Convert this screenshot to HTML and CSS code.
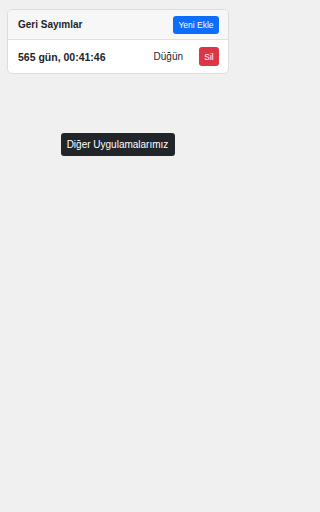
FILE: index.html
```html
<!DOCTYPE html>
<html lang="tr">
<head>
<meta charset="utf-8">
<meta name="viewport" content="width=237">
<link rel="stylesheet" href="styles.css">
</head>
<body>
<div class="page">
  <div class="card">
    <div class="card-header">
      <span class="title">Geri Sayımlar</span>
      <span class="btn btn-primary">Yeni Ekle</span>
    </div>
    <div class="row">
      <span class="count">565 gün, 00:41:46</span>
      <span class="right">
        <span class="label">Düğün</span>
        <span class="btn btn-danger">Sil</span>
      </span>
    </div>
  </div>
  <div class="center">
    <span class="btn-dark">Diğer Uygulamalarımız</span>
  </div>
</div>
</body>
</html>
```
FILE: styles.css
```css
html, body {
  margin: 0;
  padding: 0;
  background: #f0f0f0;
  font-family: "Liberation Sans", Arial, sans-serif;
  color: #212529;
}
.page {
  width: 237px;
  box-sizing: border-box;
  padding: 9px 8px 0 7px;
}
.card {
  background: #fff;
  border: 1px solid #dcdcdc;
  border-radius: 5px;
  overflow: hidden;
}
.card-header {
  height: 29px;
  background: #f7f7f7;
  border-bottom: 1px solid #e0e0e0;
  display: flex;
  align-items: center;
  justify-content: space-between;
  padding: 0 9px 0 10px;
}
.title {
  font-size: 10px;
  font-weight: 600;
}
.btn {
  display: inline-flex;
  align-items: center;
  justify-content: center;
  color: #fff;
  font-size: 8.5px;
  border-radius: 3px;
}
.btn-primary {
  background: #0d6efd;
  width: 46px;
  height: 18px;
}
.row {
  height: 33px;
  display: flex;
  align-items: center;
  justify-content: space-between;
  padding: 0 9px 0 10px;
}
.count {
  font-size: 10.5px;
  font-weight: 700;
}
.right {
  display: flex;
  align-items: center;
}
.label {
  font-size: 10px;
  margin-right: 16px;
}
.btn-danger {
  background: #dc3545;
  width: 20px;
  height: 19px;
}
.center {
  display: flex;
  justify-content: center;
  margin-top: 59px;
  padding-right: 1px;
}
.btn-dark {
  background: #212529;
  color: #fff;
  font-size: 10px;
  border-radius: 3px;
  width: 114px;
  height: 23px;
  display: inline-flex;
  align-items: center;
  justify-content: center;
}
```
